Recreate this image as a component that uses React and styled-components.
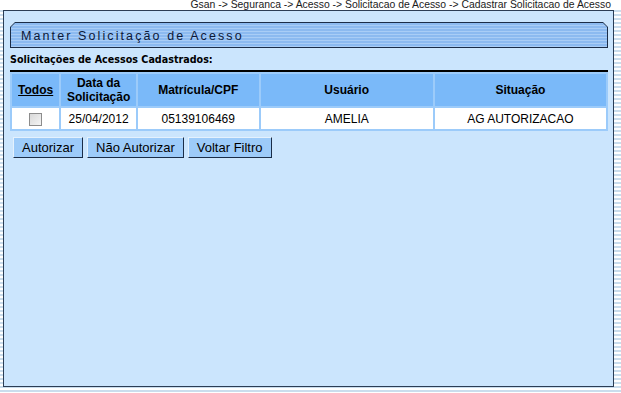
import styled, { createGlobalStyle } from 'styled-components';

const Global = createGlobalStyle`
  html, body {
    margin: 0;
    padding: 0;
  }
  body {
    font-family: "Liberation Sans", Arial, sans-serif;
  }
`;

const Page = styled.div`
  width: 621px;
  height: 393px;
  box-sizing: border-box;
  background: repeating-linear-gradient(
    to bottom,
    #ffffff 0px,
    #ffffff 2px,
    #cadded 2px,
    #cadded 4px
  );
  overflow: hidden;
`;

const Breadcrumb = styled.div`
  height: 10px;
  padding-right: 10px;
  text-align: right;
  font-size: 10.4px;
  line-height: 9px;
  color: #1a1a1a;
  background: #ffffff;
  white-space: nowrap;
`;

const Panel = styled.div`
  margin: 0 7px 0 3px;
  height: 377px;
  box-sizing: border-box;
  border: 1px solid #2b3d55;
  background: #cbe5fd;
  padding: 11px 5px 0 6px;
`;

const TitleOuter = styled.div`
  height: 26px;
  background: #1b2d47;
  clip-path: polygon(5px 0, calc(100% - 5px) 0, 100% 5px, 100% 100%, 0 100%, 0 5px);
  padding: 1px;
  box-sizing: border-box;
`;

const TitleInner = styled.div`
  height: 100%;
  clip-path: polygon(4px 0, calc(100% - 4px) 0, 100% 4px, 100% 100%, 0 100%, 0 4px);
  background: repeating-linear-gradient(
    to bottom,
    #8cbaf0 0px,
    #8cbaf0 2px,
    #a9cdf6 2px,
    #a9cdf6 3px
  );
  display: flex;
  align-items: center;
  padding: 2px 0 0 10px;
  box-sizing: border-box;
  font-size: 12.5px;
  letter-spacing: 2.1px;
  color: #0b1838;
`;

const SectionLabel = styled.div`
  margin-top: 5px;
  font-family: "DejaVu Sans", Tahoma, sans-serif;
  font-weight: bold;
  font-size: 9.6px;
  color: #000;
  height: 13px;
  line-height: 13px;
`;

const Table = styled.table`
  margin-top: 4px;
  width: 598px;
  border-collapse: separate;
  border-spacing: 2px;
  background: #9ccbfa;
  border-top: 2px solid #000;
  font-size: 12px;
`;

const HeadCell = styled.th`
  background: #7ab9f9;
  height: 32px;
  padding: 0;
  font-weight: bold;
  text-align: center;
  line-height: 14px;
  color: #000;
  width: ${({ $w }) => $w}px;
  text-decoration: ${({ $link }) => ($link ? 'underline' : 'none')};
`;

const Cell = styled.td`
  background: #ffffff;
  height: 21px;
  padding: 0;
  text-align: center;
  color: #000;
`;

const Check = styled.span`
  display: inline-block;
  width: 11px;
  height: 11px;
  border: 1px solid #8c8c8c;
  background: linear-gradient(135deg, #d8d8d8, #f4f4f4);
  vertical-align: middle;
`;

const ButtonRow = styled.div`
  display: flex;
  gap: 4px;
  margin-top: 6px;
  padding-left: 3px;
`;

const Button = styled.button`
  height: 21px;
  padding: 0 8px;
  font-family: "Liberation Sans", Arial, sans-serif;
  font-size: 13px;
  color: #000;
  background: #9dcbf9;
  border: 1px solid;
  border-color: #e4f1fd #1b2d47 #1b2d47 #e4f1fd;
  cursor: pointer;
`;

const rows = [
  { data: '25/04/2012', matricula: '05139106469', usuario: 'AMELIA', situacao: 'AG AUTORIZACAO' },
];

export default function App() {
  return (
    <Page>
      <Global />
      <Breadcrumb>
        Gsan -&gt; Seguranca -&gt; Acesso -&gt; Solicitacao de Acesso -&gt; Cadastrar Solicitacao de Acesso
      </Breadcrumb>
      <Panel>
        <TitleOuter>
          <TitleInner>Manter Solicitação de Acesso</TitleInner>
        </TitleOuter>
        <SectionLabel>Solicitações de Acessos Cadastrados:</SectionLabel>
        <Table>
          <thead>
            <tr>
              <HeadCell $w={47} $link>Todos</HeadCell>
              <HeadCell $w={74}>Data da<br />Solicitação</HeadCell>
              <HeadCell $w={120}>Matrícula/CPF</HeadCell>
              <HeadCell $w={171}>Usuário</HeadCell>
              <HeadCell $w={170}>Situação</HeadCell>
            </tr>
          </thead>
          <tbody>
            {rows.map((r) => (
              <tr key={r.matricula}>
                <Cell><Check /></Cell>
                <Cell>{r.data}</Cell>
                <Cell>{r.matricula}</Cell>
                <Cell>{r.usuario}</Cell>
                <Cell>{r.situacao}</Cell>
              </tr>
            ))}
          </tbody>
        </Table>
        <ButtonRow>
          <Button>Autorizar</Button>
          <Button>Não Autorizar</Button>
          <Button>Voltar Filtro</Button>
        </ButtonRow>
      </Panel>
    </Page>
  );
}
